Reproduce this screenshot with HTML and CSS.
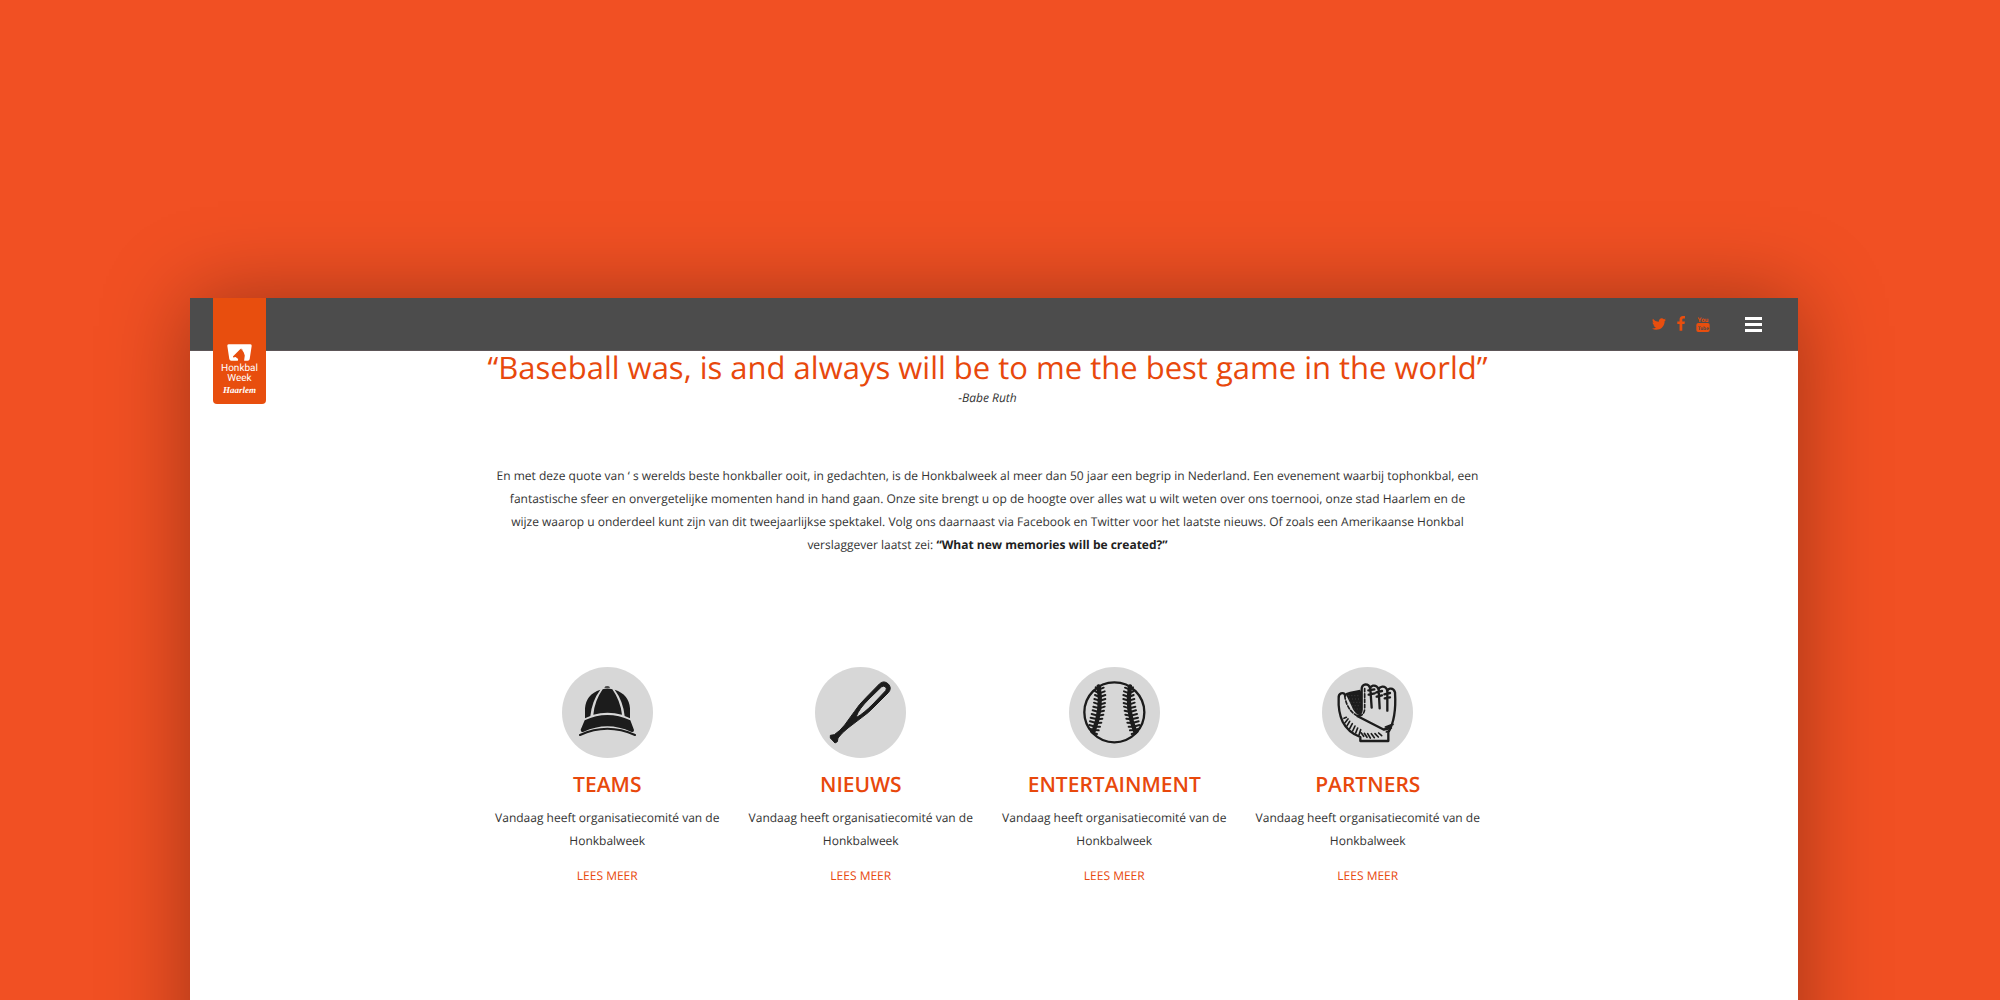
FILE: index.html
```html
<!DOCTYPE html>
<html lang="nl">
<head>
<meta charset="utf-8">
<meta name="viewport" content="width=device-width, initial-scale=1">
<title>Honkbalweek Haarlem</title>
<link rel="stylesheet" href="styles.css">
</head>
<body>
<div class="backdrop">
<div class="site">
  <header class="topbar">
    <a class="logo" href="#" aria-label="Honkbal Week Haarlem">
      <svg class="logo-mark" viewBox="0 0 76 50" aria-hidden="true">
        <path fill="#fff" d="M5 0H71Q76 0 75 5L69 45Q68 50 63 50H52L54 34L51 25L47 19L46 14L42 17L44 12L40 15L24 31L18 37L19 40L26 39L34 45L33 50H13Q8 50 7 45L1 5Q0 0 5 0Z"/>
      </svg>
      <span class="logo-name">Honkbal</span>
      <span class="logo-name">Week</span>
      <span class="logo-city">Haarlem</span>
    </a>
    <nav class="social" aria-label="Social media">
      <a href="#" aria-label="Twitter"><svg viewBox="0 0 1792 1792"><path d="M1684 408q-67 98-162 167 1 14 1 42 0 130-38 259.500t-115.500 248.500-184.500 210.500-258 146-323 54.500q-271 0-496-145 35 4 78 4 225 0 401-138-105-2-188-64.500t-114-159.500q33 5 61 5 43 0 85-11-112-23-185.500-111.500t-73.500-205.500v-4q68 38 146 41-66-44-105-115t-39-154q0-88 44-163 121 149 294.500 238.500t371.500 99.500q-8-38-8-74 0-134 94.500-228.500t228.500-94.500q140 0 236 102 109-21 205-78-37 115-142 178 93-10 186-50z"/></svg></a>
      <a href="#" aria-label="Facebook"><svg viewBox="0 0 1792 1792"><path d="M1343 12v264h-157q-86 0-116 36t-30 108v189h293l-39 296h-254v759h-306v-759h-255v-296h255v-218q0-186 104-288.500t277-102.500q147 0 228 12z"/></svg></a>
      <a href="#" aria-label="YouTube"><svg viewBox="0 0 48 48"><text class="yt-you" x="24" y="18" text-anchor="middle">You</text><rect x="4" y="21" width="40" height="27" rx="6"/><text class="yt-tube" x="24" y="41" text-anchor="middle">Tube</text></svg></a>
    </nav>
    <button class="menu" type="button" aria-label="Menu"><span></span><span></span><span></span></button>
  </header>

  <main class="content">
    <blockquote class="quote">
      <p class="quote-text">“Baseball was, is and always will be to me the best game in the world”</p>
      <cite class="quote-author">-Babe Ruth</cite>
    </blockquote>
    <p class="intro">En met deze quote van ‘ s werelds beste honkballer ooit, in gedachten, is de Honkbalweek al meer dan 50 jaar een begrip in Nederland. Een evenement waarbij tophonkbal, een<br>fantastische sfeer en onvergetelijke momenten hand in hand gaan. Onze site brengt u op de hoogte over alles wat u wilt weten over ons toernooi, onze stad Haarlem en de<br>wijze waarop u onderdeel kunt zijn van dit tweejaarlijkse spektakel. Volg ons daarnaast via Facebook en Twitter voor het laatste nieuws. Of zoals een Amerikaanse Honkbal<br>verslaggever laatst zei: <strong>“What new memories will be created?”</strong></p>

    <div class="features">
      <section class="feature">
        <svg class="feature-icon" viewBox="36 36 273 273" aria-hidden="true">
          <circle class="disc" cx="172.500" cy="172.500" r="136.500"/>
          <g class="ink">
            <path d="M163 98Q164 94 172 94Q179 94 180 98Z"/>
            <path d="M151 104Q108 118 105 160V190L121 183Q126 137 151 104Z"/>
            <path d="M194 104Q237 118 240 160V190L224 183Q219 137 194 104Z"/>
            <path d="M158 103Q172 98 187 103Q211 137 216 179Q172 167 130 179Q134 137 158 103Z"/>
            <path d="M104 196Q172 164 241 196L252 225Q252 234 243 230Q172 197 101 230Q92 233 92 224Z"/>
          </g>
          <path class="line" stroke-width="6" d="M90 240Q172 203 255 240"/>
        </svg>
        <h2>TEAMS</h2>
        <p>Vandaag heeft organisatiecomité van de Honkbalweek</p>
        <a href="#">LEES MEER</a>
      </section>
      <section class="feature">
        <svg class="feature-icon" viewBox="48 36 273 273" aria-hidden="true">
          <circle class="disc" cx="184.500" cy="172.500" r="136.500"/>
          <path class="ink bat" fill-rule="evenodd" d="M94 241L106 239Q123 228 137 210L166 170Q179 149 202 127L242 86Q255 75 268 87Q279 99 269 112L228 153Q207 175 189 187L147 219Q128 234 117 249L115 260L108 264L94 249ZM173 182Q179 163 210 132L247 96Q254 91 260 96Q264 101 260 107L222 147Q193 176 173 187Z"/>
        </svg>
        <h2>NIEUWS</h2>
        <p>Vandaag heeft organisatiecomité van de Honkbalweek</p>
        <a href="#">LEES MEER</a>
      </section>
      <section class="feature">
        <svg class="feature-icon" viewBox="42 36 273 273" aria-hidden="true">
          <circle class="disc" cx="178.500" cy="172.500" r="136.500"/>
          <circle class="line" stroke-width="7" cx="178" cy="172" r="90"/>
          <g id="seam" class="line">
            <path stroke-width="13" d="M131 94Q143 160 115 231"/>
            <path stroke-width="6" d="M122 97L131 104L146 98M120 108L133 115L149 109M120 120L134 126L151 120M118 132L134 137L151 132M117 143L134 149L150 144M115 155L133 160L149 155M113 166L131 171L147 167M110 177L129 182L145 179M107 188L127 193L142 191M105 199L124 204L139 203M103 210L121 215L135 215M104 221L117 225L131 226M108 230L114 234L126 237"/>
          </g>
          <use href="#seam" transform="translate(356 0) scale(-1 1)"/>
        </svg>
        <h2>ENTERTAINMENT</h2>
        <p>Vandaag heeft organisatiecomité van de Honkbalweek</p>
        <a href="#">LEES MEER</a>
      </section>
      <section class="feature">
        <svg class="feature-icon" viewBox="38 36 273 273" aria-hidden="true">
          <circle class="disc" cx="174.500" cy="172.500" r="136.500"/>
          <path class="ink" d="M108 115L122 110L152 104L156 112V162Q155 175 145 179Q133 171 127 154Z"/>
          <g class="line">
            <path stroke-width="7" d="M108 122Q105 112 95 115Q87 118 88 130Q86 170 100 200Q116 232 153 246V258H237V232Q262 190 257 112Q253 99 242 101Q237 102 234 107Q230 94 219 95Q211 96 208 103Q203 90 191 92Q184 94 182 100Q180 88 168 88Q157 90 157 103V164Q156 177 145 184L224 224Q240 215 250 208"/>
            <path stroke-width="5" stroke-dasharray="10 6" d="M106 122Q113 168 147 184Q166 180 166 160V100"/>
            <path stroke-width="7" d="M183 102L187 158M208 105L211 160M234 109V167M177 106L195 103M178 119L196 115M201 112L218 108M202 125L218 121M225 118L242 114M226 130L242 127"/>
            <path stroke-width="5" d="M104 190L111 187M107 203L116 192M112 214L121 199M121 221L129 206M130 228L137 213M139 234L145 219M149 240L154 224M163 244L156 234M173 247L165 235M183 249L175 236M195 248L186 236M207 246L197 236M217 242L208 234M228 216L246 209M230 224L246 219M231 231L240 227"/>
          </g>
          <path class="mesh" d="M117 122H151M119 132H153M123 142H153M127 152H153M133 162H153"/>
        </svg>
        <h2>PARTNERS</h2>
        <p>Vandaag heeft organisatiecomité van de Honkbalweek</p>
        <a href="#">LEES MEER</a>
      </section>
    </div>
  </main>
</div>
</div>
</body>
</html>
```
FILE: styles.css
```css
* { box-sizing: border-box; }

body {
  margin: 0;
  background: #f15023;
  color: #333;
  font: 12px/23px "Open Sans", "Noto Sans", sans-serif;
  text-rendering: geometricPrecision;
}

h2, p, blockquote { margin: 0; }
a { color: #e8480c; text-decoration: none; }

.backdrop {
  display: flex;
  min-height: 100vh;
  padding: 298px 202px 0 190px;
  overflow: clip;
}

/* The sheet runs on below the fold, so its side shadows do not fade out. */
.site {
  flex: 1;
  min-width: 0;
  margin-bottom: -100px;
  background: #fff;
  box-shadow: 0 0 80px rgba(0, 0, 0, .34);
}

.topbar {
  display: flex;
  align-items: center;
  height: 53px;
  padding: 0 36px 0 23px;
  background: #4c4c4c;
  border-bottom: 1px solid #5c5557;
}

.logo {
  display: flex;
  flex-direction: column;
  align-items: center;
  align-self: flex-start;
  width: 53px;
  height: 106px;
  padding-top: 46px;
  background: #e84e0e;
  border-radius: 0 0 4px 4px;
  color: #fff;
}
.logo-mark { width: 25px; height: 17px; margin-bottom: 3px; }
.logo-name { font: 10px/10px Roboto, sans-serif; }
.logo-city { font: italic bold 9px/12px "Liberation Serif", serif; }

.social {
  display: flex;
  gap: 6px;
  margin-left: auto;
}
.social a { display: flex; }
.social svg { width: 16px; height: 16px; fill: #e84e0e; }
.yt-you { font: bold 19px Roboto, sans-serif; }
.yt-tube { font: bold 15px Roboto, sans-serif; fill: #4c4c4c; }

.menu {
  display: flex;
  flex-direction: column;
  gap: 3px;
  width: 17px;
  margin-left: 34px;
  padding: 0;
  border: 0;
  background: none;
}
.menu span { height: 3px; background: #fff; }

.content {
  padding-right: 13px;
  text-align: center;
}

.quote-text {
  color: #e8480c;
  font-size: 31px;
  line-height: 34px;
}
.quote-author { display: block; line-height: 26px; }

.intro {
  max-width: 1014px;
  margin: 53px auto 0;
}
.intro strong { color: #222; }

.features {
  display: grid;
  grid-template-columns: repeat(4, 1fr);
  max-width: 1014px;
  margin: 111px auto 0;
}
.feature {
  display: flex;
  flex-direction: column;
  align-items: center;
  padding: 0 12px;
}
.feature-icon { width: 91px; height: 91px; }
.feature h2 {
  margin: 12px 0 6px;
  color: #e8480c;
  font-size: 21px;
  font-weight: 600;
  line-height: 30px;
}
.feature a { margin-top: 12px; }

.disc { fill: #d7d7d7; }
.ink { fill: #1c1c1c; }
.bat { stroke: #1c1c1c; stroke-width: 3; }
.line { fill: none; stroke: #1c1c1c; stroke-linecap: round; stroke-linejoin: round; }
.mesh { fill: none; stroke: #555; stroke-width: 2; stroke-dasharray: 3 6; }
```
